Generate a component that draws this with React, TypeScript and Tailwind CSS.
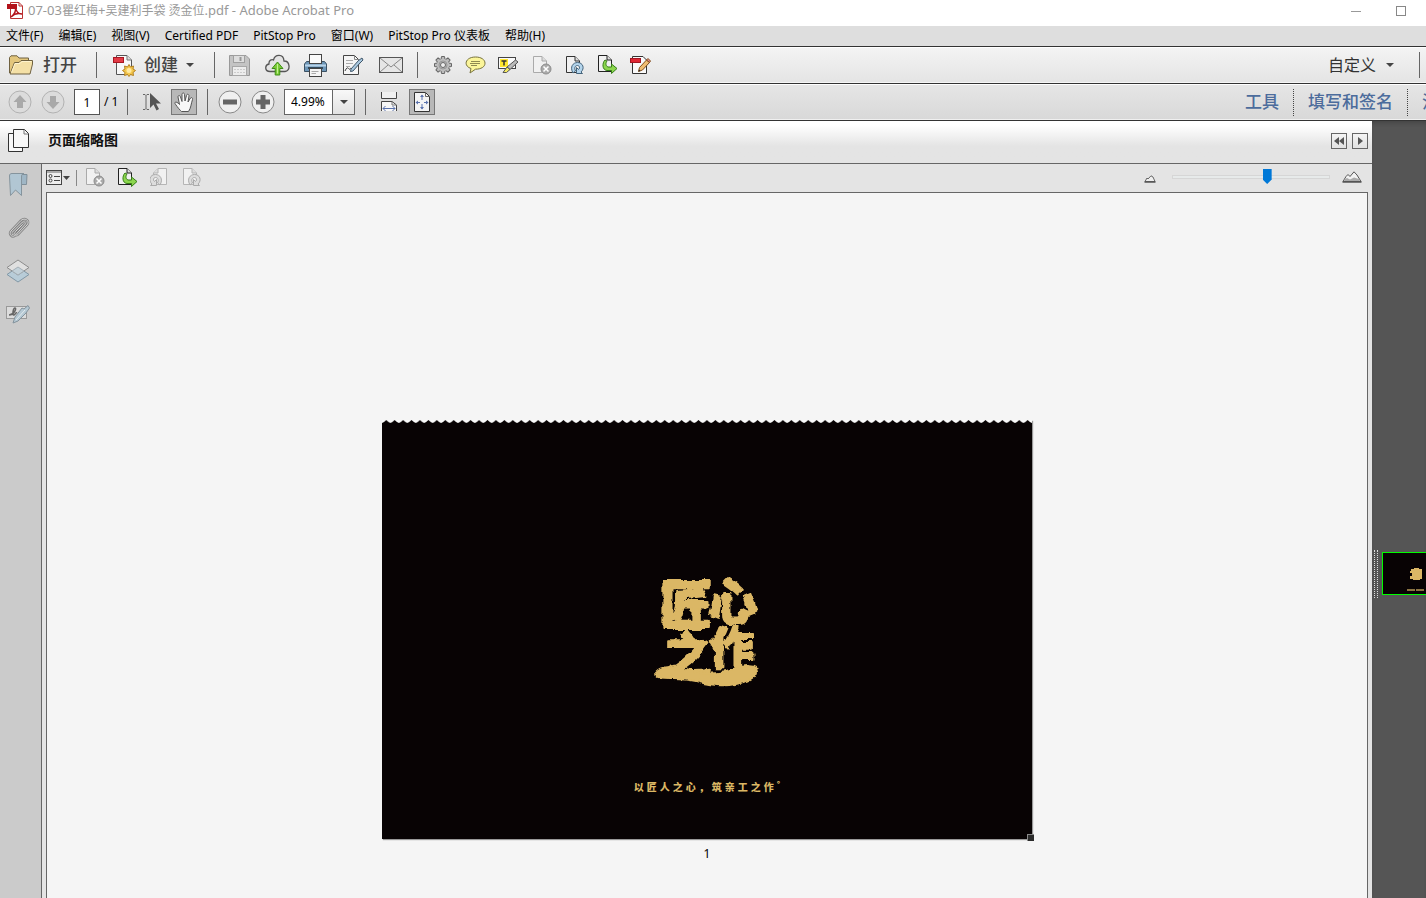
import type { ReactNode } from "react";

const MENUS = ["文件(F)", "编辑(E)", "视图(V)", "Certified PDF", "PitStop Pro", "窗口(W)", "PitStop Pro 仪表板", "帮助(H)"];
const SLOGAN = ["以", "匠", "人", "之", "心", "，", "筑", "亲", "工", "之", "作"];

function Svg({ w, h, children }: { w: number; h: number; children: ReactNode }) {
  return (
    <svg width={w} height={h} viewBox={`0 0 ${w} ${h}`} fill="none" aria-hidden="true" className="shrink-0">
      {children}
    </svg>
  );
}

function Separator() {
  return <span className="h-[26px] w-px shrink-0 bg-[#666]" />;
}

function Caret() {
  return (
    <Svg w={8} h={4}>
      <path d="M0 0H8L4 4Z" fill="#444" />
    </Svg>
  );
}

function AcrobatIcon() {
  return (
    <Svg w={16} h={17}>
      <path d="M3.500.5H12L15.500 4V16.500H3.500Z" fill="#fff" stroke="#b33" />
      <path d="M12 .5V4H15.500" stroke="#b33" />
      <rect x="0" y="2" width="10" height="5" fill="#b3131b" />
      <path d="M4 15C7 13 9 9 8.500 5C9 9 11 12 15 12C11 11 7 12 4 15Z" stroke="#b3131b" strokeWidth="1.500" />
    </Svg>
  );
}

function FolderIcon() {
  return (
    <Svg w={25} h={20}>
      <path d="M1.500 18V2.500L3 .8H9L11 3H20.500V6" fill="#e3c67c" stroke="#6f6140" />
      <path d="M2 19L6.500 7.500H11L13 5.500H24.500V9L22 19Z" fill="#f4e0a6" stroke="#6f6140" />
      <path d="M3.500 17.500L7 8.500H12L14 6.500H23.500" stroke="#fff4cf" />
    </Svg>
  );
}

function CreateIcon() {
  return (
    <Svg w={23} h={23}>
      <path d="M3.500 1.500H14L18.500 6V20.500H3.500Z" fill="#f8f8f8" stroke="#555" />
      <path d="M14 1.500V6H18.500" fill="#ddd" stroke="#777" />
      <rect x=".5" y="3.500" width="10" height="5" fill="#e23a45" stroke="#a71722" />
      <path
        d="M16 10.500L17.500 13L20.500 12L20 15L22.500 16.500L20 18.500L20.500 21.500L17.500 20.500L16 22.500L14.500 20.500L11.500 21.500L12 18.500L9.500 16.500L12 15L11.500 12L14.500 13Z"
        fill="#f3c64c"
        stroke="#b48120"
      />
      <circle cx="16" cy="16.500" r="2.500" fill="#ffe9a0" />
    </Svg>
  );
}

function SaveIcon() {
  return (
    <Svg w={21} h={21}>
      <path d="M.5.5H17L20.500 4V20.500H.5Z" fill="#c4c4c4" stroke="#999" />
      <rect x="4.500" y=".5" width="11" height="7" fill="#dedede" stroke="#a0a0a0" />
      <rect x="10.500" y="2" width="2" height="4" fill="#999" />
      <rect x="3.500" y="11.500" width="14" height="9" fill="#ededed" stroke="#a8a8a8" />
      <path d="M5 14.500H16M5 17.500H16" stroke="#ccc" strokeDasharray="2 1" />
    </Svg>
  );
}

function CloudIcon() {
  return (
    <Svg w={25} h={22}>
      <path
        d="M5 17.500C-.5 17.500-.5 11 4 10C3.500 6 7 5 8.500 6C10 0 18.500-.5 19 7C25 7 26 16.500 20 17.500Z"
        fill="#e4e4e4"
        stroke="#555"
        strokeWidth="1.300"
      />
      <path d="M12.500 8L18 14.500H14.800V21H10.200V14.500H7Z" fill="#7ccc38" stroke="#3e8d17" />
      <path d="M12.500 10V19.500" stroke="#c2f293" />
    </Svg>
  );
}

function PrinterIcon() {
  return (
    <Svg w={23} h={23}>
      <path d="M2.500 7.500H20.500L22.500 10V17.500H.5V10Z" fill="#6d96b8" stroke="#3b5163" />
      <path d="M1 11.500H22" stroke="#b7d3e8" strokeWidth="2" />
      <rect x="5.500" y=".5" width="12" height="9" fill="#fafafa" stroke="#444" />
      <path d="M4 14H19" stroke="#344a5b" strokeWidth="2" />
      <rect x="5.500" y="14.500" width="12" height="8" fill="#f5f5f5" stroke="#444" />
      <path d="M7.500 17.500H14.500M7.500 19.500H12" stroke="#aaa" />
    </Svg>
  );
}

function SignIcon() {
  return (
    <Svg w={22} h={22}>
      <path d="M1.500 1.500H12.500L16.500 5.500V20.500H1.500Z" fill="#f5f5f5" stroke="#444" />
      <path d="M12.500 1.500V5.500H16.500" stroke="#888" />
      <path d="M4 6.500H11M4 9.500H11M4 12.500H8" stroke="#aaa" />
      <path d="M3 17C6 10 7 17 8 15S9 16 11 15.500" stroke="#444" />
      <path d="M9 15L16.500 6.500L20 4L21 6L18 9L11 17L8.500 17.500Z" fill="#a9c8df" stroke="#40566a" />
    </Svg>
  );
}

function MailIcon() {
  return (
    <Svg w={24} h={16}>
      <rect x=".5" y=".5" width="23" height="15" fill="#e6e6e6" stroke="#555" />
      <path d="M1 1L12 10L23 1M1 15L9 8M23 15L15 8" stroke="#888" />
    </Svg>
  );
}

function GearIcon() {
  const teeth = [0, 45, 90, 135, 180, 225, 270, 315];
  return (
    <Svg w={20} h={20}>
      {teeth.map((a) => (
        <path key={a} d="M8 4.500L8.500 1.500H11.500L12 4.500" fill="#bbb" stroke="#666" transform={`rotate(${a} 10 10)`} />
      ))}
      <circle cx="10" cy="10" r="6" fill="#bbb" />
      <circle cx="10" cy="10" r="4" stroke="#999" />
      <circle cx="10" cy="10" r="2.500" fill="#eee" stroke="#666" />
    </Svg>
  );
}

function CommentIcon() {
  return (
    <Svg w={21} h={18}>
      <path
        d="M10.500 1C16 1 20 3.500 20 7.200S16 13.200 10.500 13.200L5 17L6 12.500C-2 10 0 1 10.500 1Z"
        fill="#fbf59a"
        stroke="#77723c"
      />
      <path d="M6 5.500H15M5 7.500H15M6 9.500H12" stroke="#8f8a50" />
    </Svg>
  );
}

function HighlightIcon() {
  return (
    <Svg w={21} h={18}>
      <rect x=".5" y="1.500" width="17" height="11" fill="#fafafa" stroke="#444" />
      <rect x="2" y="3" width="8" height="8" fill="#ffe62e" />
      <path d="M3.500 5H8.500M6 5V9.500" stroke="#333" strokeWidth="1.500" />
      <path d="M9 11L17.500 4L20 6L12 13.500Z" fill="#bbb" stroke="#555" />
      <path d="M9 11L12 13.500L8.500 16.500H5Z" fill="#f4e95f" stroke="#555" />
    </Svg>
  );
}

function PageShape({ color }: { color: string }) {
  return (
    <>
      <path d="M1.500.5H10L14.500 5V16.500H1.500Z" fill="#f1f1f1" stroke={color} />
      <path d="M10 .5V5H14.500" fill="#ddd" stroke={color} />
    </>
  );
}

function DeletePageIcon() {
  return (
    <Svg w={20} h={19}>
      <PageShape color="#aaa" />
      <circle cx="14" cy="13" r="5" fill="#aaa" stroke="#8d8d8d" />
      <path d="M11.500 10.500L16.500 15.500M16.500 10.500L11.500 15.500" stroke="#fff" strokeWidth="1.500" />
    </Svg>
  );
}

function RotatePageIcon({ muted = false, flip = false }: { muted?: boolean; flip?: boolean }) {
  const edge = muted ? "#aaa" : "#45647c";
  const body = muted ? "#ddd" : "#b4d5ec";
  return (
    <Svg w={19} h={19}>
      <g transform={flip ? "translate(18 0) scale(-1 1)" : undefined}>
        <PageShape color={muted ? "#b5b5b5" : "#333"} />
        <path
          d="M8 17C4.500 11 8 6.500 12.500 6.500C18 6.500 20 12.500 16 16L17.500 17.500H11.500V11.500L13.500 13.500C15.500 11.500 14 9.500 12.500 9.500C10 9.500 9 12 10.500 15Z"
          fill={body}
          stroke={edge}
        />
      </g>
    </Svg>
  );
}

function ExtractIcon() {
  return (
    <Svg w={21} h={20}>
      <PageShape color="#222" />
      <path
        d="M8 5C5 8 5 15 10 15.500H14.500V18.500L20 13.500L14.500 9V12H11C8.500 11 8.500 8 10 6Z"
        fill="#8cd64e"
        stroke="#367e17"
      />
    </Svg>
  );
}

function EditPdfIcon() {
  return (
    <Svg w={21} h={20}>
      <path d="M2.500 1.500H13L16.500 5V18.500H2.500Z" fill="#fafafa" stroke="#333" />
      <rect x=".5" y="3.500" width="10" height="4" fill="#df2633" stroke="#a31722" />
      <path d="M8.500 16.500L9.500 12.500L16.500 5L19.500 7.500L12.500 15Z" fill="#f1bd72" stroke="#80501e" />
      <path d="M16.500 5L18 3.500L20.500 6L19.500 7.500Z" fill="#e9898b" stroke="#80501e" />
      <path d="M8.500 16.500L9 14.500L10.500 16Z" fill="#222" />
    </Svg>
  );
}

function ArrowCircle({ down = false }: { down?: boolean }) {
  return (
    <Svg w={24} h={24}>
      <circle cx="12" cy="12" r="11" fill="#dcdcdc" stroke="#b2b2b2" />
      <path d="M12 5L18.500 12H15V18H9V12H5.500Z" fill="#a9a9a9" transform={down ? "rotate(180 12 12)" : undefined} />
    </Svg>
  );
}

function ZoomCircle({ plus = false }: { plus?: boolean }) {
  return (
    <Svg w={24} h={24}>
      <circle cx="12" cy="12" r="11" fill="#f0f0f0" stroke="#888" />
      <rect x="5" y="9.500" width="14" height="5" fill="#666" />
      {plus && <rect x="9.500" y="5" width="5" height="14" fill="#666" />}
    </Svg>
  );
}

function SelectToolIcon() {
  return (
    <Svg w={20} h={20}>
      <path d="M1 2.500H3L4 3.500L5 2.500H7M4 3.500V16.500M1 17.500H3L4 16.500L5 17.500H7" stroke="#666" />
      <path d="M8 1V16L11.500 12.500L14.500 18.500L17 17L14 11.500H19Z" fill="#555" />
    </Svg>
  );
}

function HandIcon() {
  return (
    <Svg w={21} h={21}>
      <path
        d="M6.500 18.500C4 16 2 13 1 11.500C.5 9.500 3 9.500 5.500 12.500L4 5C4 3 6 3 6.500 5L8 9.500L8 2.500C8 .5 10.500.5 10.500 2.500L11 9L12.500 3.500C13 1.500 15 2 15 4L14 10L16.500 6C17.500 5 19 6 18.500 7.500C17 12 17 16 14.500 19.500H7.500Z"
        fill="#f8f8f8"
        stroke="#555"
      />
    </Svg>
  );
}

function FitWidthIcon() {
  return (
    <Svg w={18} h={22}>
      <path d="M1.500 1V7.500H16.500V1" fill="#f0f0f0" stroke="#444" />
      <path d="M1.500 20V10.500H12L16.500 14V20" fill="#f7f7f7" stroke="#444" />
      <path d="M12 10.500V14H16.500" stroke="#777" />
      <path d="M3 17.500H15M5.500 15L3 17.500L5.500 20M12.500 15L15 17.500L12.500 20" stroke="#5b73ad" />
    </Svg>
  );
}

function FitPageIcon() {
  return (
    <Svg w={18} h={20}>
      <path d="M1.500.5H12.500L16.500 4.500V19.500H1.500Z" fill="#f4f4f4" stroke="#333" />
      <path d="M12.500.5V4.500H16.500" stroke="#666" />
      <path d="M9 3V8M9 12V17M3 10.500H7M11 10.500H15" stroke="#5b73ad" />
      <path d="M7 5L9 2.500L11 5ZM7 15L9 17.500L11 15ZM5 8.500L2.500 10.500L5 12.500ZM13 8.500L15.500 10.500L13 12.500Z" fill="#5b73ad" />
    </Svg>
  );
}

function PagesIcon() {
  return (
    <Svg w={22} h={24}>
      <path d="M.5 4.500H14.500V22.500H.5Z" fill="#f8f8f8" stroke="#333" />
      <path d="M5.500.5H16.500L20.500 4.500V18.500H5.500Z" fill="#f8f8f8" stroke="#333" />
      <path d="M16 1V5H20" stroke="#777" />
    </Svg>
  );
}

function BookmarkIcon() {
  return (
    <Svg w={19} h={24}>
      <path d="M12.500 1.500H18L17.500 11.500H12.500Z" fill="#9fb6c5" stroke="#80909a" />
      <path d="M.5 3C.5 1 1.500.5 3 .5H15C13 .5 12.500 2 12.500 4V22.500L6.500 17L1.500 22.500Z" fill="#b1c6d3" stroke="#85949d" />
    </Svg>
  );
}

function ClipIcon() {
  return (
    <Svg w={23} h={24}>
      <g strokeLinecap="round">
        <path
          d="M5 15.500L15 5.500C17.500 3.500 19.500 6 17.500 8L8 18.500C5 21 1.500 17 4 14L14 3.500C18 0 23.500 4 20 8L11 17.500C8.500 19.500 6.500 17 8.500 14.500L15.500 7.500"
          stroke="#858585"
          strokeWidth="2.500"
          transform="translate(0 1)"
        />
        <path
          d="M5 15.500L15 5.500C17.500 3.500 19.500 6 17.500 8L8 18.500C5 21 1.500 17 4 14L14 3.500C18 0 23.500 4 20 8L11 17.500C8.500 19.500 6.500 17 8.500 14.500L15.500 7.500"
          stroke="#d4d4d4"
          transform="translate(0 1)"
        />
      </g>
    </Svg>
  );
}

function LayersIcon() {
  return (
    <Svg w={24} h={24}>
      <path d="M12 8L23 15.500L12 23L1 15.500Z" fill="#b8ccd8" stroke="#8197a5" />
      <path d="M12 1L23 8.500L12 16L1 8.500Z" fill="#e0e0e0" stroke="#8c8c8c" />
      <path d="M6 12L12 8L18 12L12 16Z" fill="#c3d1d9" stroke="#a4afb6" />
    </Svg>
  );
}

function SignatureIcon() {
  return (
    <Svg w={24} h={20}>
      <rect x=".5" y="2.500" width="20" height="12" fill="#dcdcdc" stroke="#999" />
      <path d="M3 11C8 11 11 4 9 4S6 12 8 11S10 8 11 9" stroke="#666" strokeWidth="1.500" />
      <path d="M7 19L9 13L16 4L18 5L22 1.500L23.500 4L20 9L12 17Z" fill="#b6c9d4" stroke="#84939d" />
      <path d="M10 16L19 6" stroke="#e3ebef" />
    </Svg>
  );
}

function OptionsIcon() {
  return (
    <Svg w={25} h={16}>
      <rect x=".5" y=".5" width="15" height="14" fill="#eee" stroke="#444" />
      <path d="M1 2H15" stroke="#aaa" strokeWidth="2" />
      <circle cx="4.500" cy="6" r="1.500" stroke="#444" />
      <circle cx="4.500" cy="10.500" r="1.500" stroke="#444" />
      <path d="M8 6.500H14M8 10.500H14" stroke="#444" />
      <path d="M17 6H24L20.500 10Z" fill="#444" />
    </Svg>
  );
}

function Mountains({ large = false }: { large?: boolean }) {
  return large ? (
    <Svg w={20} h={12}>
      <path d="M1 10.500L4 5.500L6 3.500L8 5.500L12 .8L15 4L19 10.500Z" fill="#f2f2f2" stroke="#555" />
      <path d="M3 8L5 7L8 8.500L12 6.500L17 8L18 10H2Z" fill="#aaa" />
      <path d="M.5 11H19.500" stroke="#555" strokeWidth="1.500" />
    </Svg>
  ) : (
    <Svg w={12} h={8}>
      <path d="M1 6.500L3 3L4 4L7 .8L9 2L11 6.500Z" fill="#eee" stroke="#666" />
      <path d="M.5 7H11.500" stroke="#555" strokeWidth="1.500" />
    </Svg>
  );
}

function Seal() {
  return (
    <svg width="108" height="114" viewBox="0 0 108 114" role="img" aria-label="匠心之作" className="overflow-visible">
      <defs>
        <filter id="brush" x="-5%" y="-5%" width="110%" height="110%">
          <feTurbulence type="fractalNoise" baseFrequency="0.1" numOctaves="3" seed="7" />
          <feDisplacementMap in="SourceGraphic" scale="6" xChannelSelector="R" yChannelSelector="G" />
        </filter>
      </defs>
      <g
        filter="url(#brush)"
        fill="#dbb765"
        stroke="#dbb765"
        strokeWidth="2"
        strokeLinejoin="round"
        className="font-['Noto_Sans_CJK_SC',sans-serif] font-black"
      >
        <text x="7" y="50" fontSize="52">匠</text>
        <text x="56" y="45" fontSize="48">心</text>
        <text x="10" y="98" fontSize="48">之</text>
        <text x="57" y="89" fontSize="44">作</text>
        <path d="M3 98C10 90 22 94 31 95C44 98 64 101 80 95C91 90 104 89 104 97C103 105 91 107 82 109C70 112 57 110 43 106C29 103 16 105 4 103Z" />
      </g>
    </svg>
  );
}

function IconButton({ label, wide = false, children }: { label: string; wide?: boolean; children: ReactNode }) {
  return (
    <button
      aria-label={label}
      className={wide ? "flex w-[38px] shrink-0 items-center justify-center" : "flex w-[33px] shrink-0 items-center justify-center"}
    >
      {children}
    </button>
  );
}

function SmallButton({ label, children }: { label: string; children: ReactNode }) {
  return (
    <button aria-label={label} className="flex w-8 shrink-0 items-center justify-center">
      {children}
    </button>
  );
}

function SideButton({ label, children }: { label: string; children: ReactNode }) {
  return (
    <button aria-label={label} className="flex size-6 items-center justify-center">
      {children}
    </button>
  );
}

function TitleBar() {
  return (
    <header className="flex h-[26px] shrink-0 items-center bg-white pl-[7px] text-[#999]">
      <div className="flex flex-1 items-center gap-[5px] pb-[5px]">
        <AcrobatIcon />
        <h1 className="text-[13px] whitespace-nowrap">
          07-03<span className="text-[12px]">瞿红梅</span>+<span className="text-[12px]">吴建利手袋 烫金位</span>.pdf - Adobe Acrobat Pro
        </h1>
      </div>
      <div className="flex gap-[35px] pr-5 pb-[5px]">
        <button aria-label="最小化">
          <Svg w={10} h={10}><path d="M0 5.500H10" stroke="#999" /></Svg>
        </button>
        <button aria-label="最大化">
          <Svg w={10} h={10}><rect x=".5" y=".5" width="9" height="9" stroke="#888" /></Svg>
        </button>
      </div>
    </header>
  );
}

function MainToolbar() {
  return (
    <div className="flex h-[37px] shrink-0 items-center border-t border-[#333] bg-linear-to-b from-[#f4f4f4] to-[#e4e4e4] pl-2 shadow-[inset_0_1px_0_#fff,inset_0_-1px_0_#f6f6f6]">
      <button className="flex items-center gap-[10px] text-[17px] font-medium text-[#444]">
        <FolderIcon />
        打开
      </button>
      <div className="flex items-center pl-[19px]">
        <Separator />
      </div>
      <button className="flex items-center gap-2 pr-5 pl-4 text-[17px] font-medium text-[#444]">
        <CreateIcon />
        创建
        <Caret />
      </button>
      <Separator />
      <div className="flex items-center pr-[7px] pl-[5px]">
        <IconButton label="保存" wide><SaveIcon /></IconButton>
        <IconButton label="上传" wide><CloudIcon /></IconButton>
        <IconButton label="打印" wide><PrinterIcon /></IconButton>
        <IconButton label="签名" wide><SignIcon /></IconButton>
        <IconButton label="邮件" wide><MailIcon /></IconButton>
      </div>
      <Separator />
      <div className="flex items-center pl-2">
        <IconButton label="设置"><GearIcon /></IconButton>
        <IconButton label="批注"><CommentIcon /></IconButton>
        <IconButton label="高亮文本"><HighlightIcon /></IconButton>
        <IconButton label="删除页面"><DeletePageIcon /></IconButton>
        <IconButton label="旋转页面"><RotatePageIcon /></IconButton>
        <IconButton label="提取页面"><ExtractIcon /></IconButton>
        <IconButton label="编辑 PDF"><EditPdfIcon /></IconButton>
      </div>
      <button className="ml-auto flex items-center gap-[10px] pr-[25px] text-[16px] text-[#333]">
        自定义
        <Caret />
      </button>
      <Separator />
      <span className="w-[6px]" />
    </div>
  );
}

function PageToolbar() {
  return (
    <div className="flex h-[37px] shrink-0 items-center overflow-hidden border-t border-[#333] bg-linear-to-b from-[#e6e6e6] to-[#d8d8d8] pl-[3px] shadow-[inset_0_1px_0_#fff,inset_0_-1px_0_#f0f0f0]">
      <IconButton label="上一页"><ArrowCircle /></IconButton>
      <IconButton label="下一页"><ArrowCircle down /></IconButton>
      <label className="flex items-center gap-1 pr-[9px] pl-[5px] text-[12px] text-black">
        <input aria-label="页码" defaultValue="1" className="h-[26px] w-[26px] border border-[#555] bg-white text-center" />
        <span className="w-[14px] whitespace-nowrap">/ 1</span>
      </label>
      <Separator />
      <button aria-label="选择工具" className="flex w-[43px] shrink-0 items-center justify-center pl-1">
        <SelectToolIcon />
      </button>
      <button aria-label="手形工具" className="flex size-[26px] shrink-0 items-center justify-center border border-[#777] bg-[#b8b8b8]">
        <HandIcon />
      </button>
      <span className="w-[10px]" />
      <Separator />
      <div className="flex pr-[5px] pl-[5px]">
        <IconButton label="缩小"><ZoomCircle /></IconButton>
        <IconButton label="放大"><ZoomCircle plus /></IconButton>
      </div>
      <div className="relative flex h-[26px] w-[71px] shrink-0 border border-[#666] bg-white">
        <select aria-label="缩放比例" className="w-full appearance-none bg-transparent pl-[6px] text-[12px] text-black">
          <option>4.99%</option>
          <option>100%</option>
        </select>
        <span className="pointer-events-none absolute inset-y-0 right-0 flex w-[22px] items-center justify-center border-l border-[#666] bg-linear-to-b from-[#f8f8f8] to-[#e2e2e2]">
          <Caret />
        </span>
      </div>
      <span className="w-[10px]" />
      <Separator />
      <button aria-label="适合宽度" className="flex w-[43px] shrink-0 items-center justify-center pl-[2px]">
        <FitWidthIcon />
      </button>
      <button aria-label="适合页面" className="flex size-[26px] shrink-0 items-center justify-center border border-[#777] bg-[#b8b8b8]">
        <FitPageIcon />
      </button>
      <nav className="ml-auto flex items-center text-[17px] font-medium whitespace-nowrap text-[#4c6c9c]">
        <button className="pr-[14px]">工具</button>
        <span className="h-[27px] border-l border-dotted border-[#444]" />
        <button className="px-[14px]">填写和签名</button>
        <span className="h-[27px] border-l border-dotted border-[#444]" />
        <button className="w-[18px] overflow-hidden pl-[14px] text-left">注释</button>
      </nav>
    </div>
  );
}

function PanelHeader() {
  return (
    <div className="flex h-[43px] shrink-0 items-center border-b border-[#666] bg-linear-to-b from-white from-10% to-[#e4e4e4] to-60% pr-1 pb-[2px] pl-2">
      <button aria-label="页面"><PagesIcon /></button>
      <h2 className="flex-1 pb-[3px] pl-[18px] text-[14px] font-bold text-[#111]">页面缩略图</h2>
      <div className="flex gap-[5px]">
        <button aria-label="折叠面板" className="flex size-4 items-center justify-center border border-[#666]">
          <Svg w={10} h={8}><path d="M5 0V8L0 4ZM10 0V8L5 4Z" fill="#555" /></Svg>
        </button>
        <button aria-label="展开面板" className="flex size-4 items-center justify-center border border-[#666]">
          <Svg w={5} h={8}><path d="M0 0V8L5 4Z" fill="#555" /></Svg>
        </button>
      </div>
    </div>
  );
}

function ThumbnailToolbar() {
  return (
    <div className="flex h-7 shrink-0 items-center pb-[1px]">
      <button aria-label="选项"><OptionsIcon /></button>
      <span className="mr-[2px] ml-[5px] h-4 w-px bg-[#888]" />
      <SmallButton label="删除页面"><DeletePageIcon /></SmallButton>
      <SmallButton label="提取页面"><ExtractIcon /></SmallButton>
      <SmallButton label="逆时针旋转"><RotatePageIcon muted flip /></SmallButton>
      <SmallButton label="顺时针旋转"><RotatePageIcon muted /></SmallButton>
      <div className="ml-auto flex items-center pr-[6px] pb-[1px]">
        <div className="pt-1"><Mountains /></div>
        <input
          type="range"
          aria-label="缩略图大小"
          defaultValue={61}
          className="mr-3 ml-4 h-4 w-[158px] appearance-none bg-transparent [&::-webkit-slider-runnable-track]:h-1 [&::-webkit-slider-runnable-track]:border [&::-webkit-slider-runnable-track]:border-[#d6d6d6] [&::-webkit-slider-runnable-track]:bg-[#e7eaea] [&::-webkit-slider-thumb]:-mt-[7px] [&::-webkit-slider-thumb]:h-[15px] [&::-webkit-slider-thumb]:w-[9px] [&::-webkit-slider-thumb]:appearance-none [&::-webkit-slider-thumb]:bg-[#0078d7] [&::-webkit-slider-thumb]:[clip-path:polygon(0_0,100%_0,100%_70%,50%_100%,0_70%)]"
        />
        <Mountains large />
      </div>
    </div>
  );
}

function PageThumbnail() {
  return (
    <figure className="flex flex-col items-center">
      <div className="relative flex h-[419px] w-[650px] flex-col items-center bg-[#080304] pt-[155px] shadow-[1px_1px_1px_#999]">
        <svg width="100%" height="3" className="absolute top-0 left-0" aria-hidden="true">
          <defs>
            <pattern id="teeth" width="8.44" height="3" patternUnits="userSpaceOnUse">
              <path d="M0 0H4.200L2 2L0 3ZM4.200 0H8.440V3L6.500 2Z" fill="#fafafa" />
            </pattern>
          </defs>
          <rect width="100%" height="3" fill="url(#teeth)" />
        </svg>
        <Seal />
        <p className="mt-[91px] flex gap-[3px] font-['Noto_Sans_CJK_SC',sans-serif] text-[10px] leading-[14px] font-black text-[#dbb765]">
          {SLOGAN.map((ch, i) => (
            <span key={i}>{ch}</span>
          ))}
          <span className="text-[8px] leading-[8px]">°</span>
        </p>
        <span className="absolute -right-[2px] -bottom-[2px] size-[7px] border-t border-l border-[#888] bg-[#2a2a2a]" />
      </div>
      <figcaption className="mt-[6px] text-[12px] leading-[18px] text-black">1</figcaption>
    </figure>
  );
}

function DocumentStrip() {
  return (
    <aside className="flex w-[54px] shrink-0 items-start overflow-hidden bg-[#555] pt-[429px] pl-[2px] shadow-[inset_0_4px_4px_-2px_#444]">
      <span className="h-12 w-1 shrink-0 border-x border-dotted border-[#ddd]" />
      <div className="mt-[2px] ml-1 flex h-[43px] w-[66px] shrink-0 flex-col border border-[#00ff00] bg-[#080304] pt-[15px] pl-[27px]">
        <Svg w={12} h={13}>
          <path d="M1 1H4V0H9V1H12V11H10V12H3V11H0V8H2V5H0V3H1Z" fill="#dbb765" />
        </Svg>
        <span className="mt-2 -ml-[3px] flex gap-px">
          <span className="h-[2px] w-2 bg-[#8a7342]" />
          <span className="h-[2px] w-2 bg-[#8a7342]" />
        </span>
      </div>
    </aside>
  );
}

export default function App() {
  return (
    <div className="flex h-screen flex-col overflow-hidden bg-[#e4e4e4] font-['Noto_Sans','Noto_Sans_CJK_SC',sans-serif] text-[12px]">
      <TitleBar />
      <nav className="flex h-5 shrink-0 items-center gap-[15px] bg-[#dedede] pl-[6px] text-[12px] whitespace-nowrap text-black">
        {MENUS.map((m) => (
          <button key={m}>{m}</button>
        ))}
      </nav>
      <MainToolbar />
      <PageToolbar />
      <div className="flex min-h-0 flex-1 border-t border-[#333]">
        <main className="flex min-w-0 flex-1 flex-col">
          <PanelHeader />
          <div className="flex min-h-0 flex-1">
            <nav className="flex w-[42px] shrink-0 flex-col items-center gap-[19px] border-r border-[#666] bg-[#cbcbcb] pt-[9px] pr-[5px]">
              <SideButton label="书签"><BookmarkIcon /></SideButton>
              <SideButton label="附件"><ClipIcon /></SideButton>
              <SideButton label="图层"><LayersIcon /></SideButton>
              <SideButton label="签名"><SignatureIcon /></SideButton>
            </nav>
            <section className="flex min-w-0 flex-1 flex-col px-1">
              <ThumbnailToolbar />
              <div className="flex min-h-0 flex-1 items-start justify-center overflow-hidden border border-b-0 border-[#666] bg-[#f5f5f5] pt-[227px]">
                <PageThumbnail />
              </div>
            </section>
          </div>
        </main>
        <DocumentStrip />
      </div>
    </div>
  );
}
